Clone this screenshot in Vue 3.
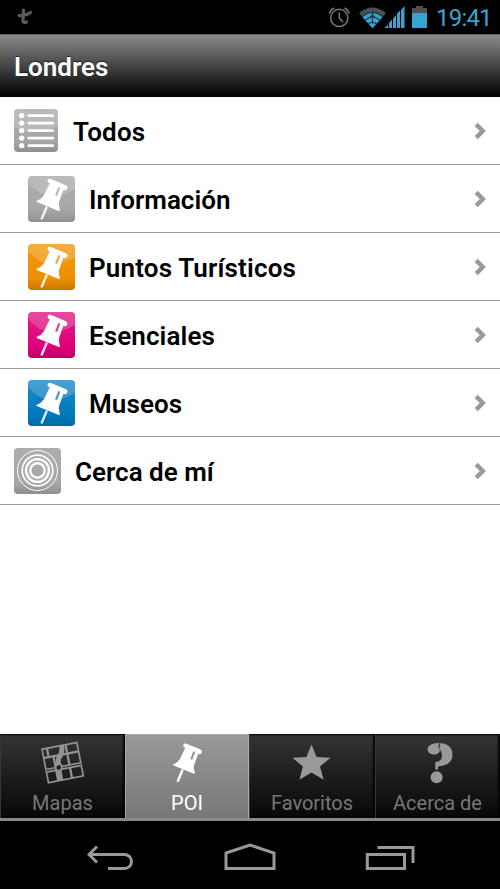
<script setup>
const rows = [
  { label: 'Todos', kind: 'list', color: 'gray', spacing: '0.2px' },
  { label: 'Información', kind: 'pin', color: 'gray', nested: true, spacing: '0px' },
  { label: 'Puntos Turísticos', kind: 'pin', color: 'orange', nested: true, spacing: '0.16px' },
  { label: 'Esenciales', kind: 'pin', color: 'pink', nested: true, spacing: '0.1px' },
  { label: 'Museos', kind: 'pin', color: 'blue', nested: true, spacing: '0.1px' },
  { label: 'Cerca de mí', kind: 'near', color: 'gray', spacing: '0px' },
]
const tabs = [
  { label: 'Mapas', kind: 'map' },
  { label: 'POI', kind: 'pin', active: true },
  { label: 'Favoritos', kind: 'star' },
  { label: 'Acerca de', kind: 'help' },
]
const pinPath =
  'M21 2.8Q19.4 3.4 19.5 5.3Q19.7 6.9 21.8 7.3L15.8 19.5Q13 23.5 8.5 25Q8.4 25.8 9.3 26.2L30.8 35Q31.9 35.2 31.9 34Q30.2 29 31.2 25.5L35.4 13.8Q38.2 14.8 39.1 13L39.5 11.3Q39.3 9.6 37.4 8.9L23 3Q22 2.5 21 2.8ZM30.3 11L27.1 19.2L29.1 20L32.3 11.8Z'
</script>

<template>
  <div class="screen">
    <header class="status">
      <svg class="bird" width="18" height="20" viewBox="0 0 18 20">
        <path d="M7.5 3L7 13.5Q7.2 16.5 10.5 15" />
        <path d="M3 8.5Q9 9.5 14.5 5.5" />
      </svg>
      <div class="indicators">
        <svg class="signals" width="78" height="26" viewBox="0 0 78 26">
          <g fill="none" stroke="#777" stroke-width="1.5">
            <circle cx="12.3" cy="13.9" r="8.6" />
            <path d="M12.3 8.5v5.6l3.6 3.8M2.3 9.5Q3.5 5.5 7.3 4M17.3 4Q21.2 5.5 22.3 9.5" />
          </g>
          <path d="M32 9Q45.5-2 59 9L45.5 24.3Z" fill="#4b4f51" />
          <path d="M35.5 13Q45.5 5 55.5 13L45.5 24.3Z" fill="#36a4d0" />
          <g fill="none" stroke="#153745" stroke-width="1.1">
            <path d="M35.5 12.5Q45.5 4.5 55.5 12.5M38.5 16Q45.5 10 52.5 16M41.5 20Q45.5 16 49.5 20M45.5 7V20M42.5 14L45.5 11L48.5 14" />
          </g>
          <path d="M57.5 24L61 20.5V24zM62 24v-5l3-3.5V24zM66 24v-9.5l3-3.5V24zM70 24V9.5l3-3V24zM74 24V6l3.5-4V24z" fill="#36a4d0" />
        </svg>
        <svg class="battery" width="15" height="22" viewBox="0 0 15 22">
          <path d="M0 2h4V0h7v2h4v6H0z" fill="#505050" />
          <path d="M0 7h15v15H0z" fill="#36a4d0" />
        </svg>
        <time>19:41</time>
      </div>
    </header>

    <div class="titlebar"><h1>Londres</h1></div>

    <main>
      <div v-for="row in rows" :key="row.label" class="row" :class="[row.kind, { nested: row.nested }]">
        <span class="tile" :class="row.color">
          <svg v-if="row.kind === 'pin'" viewBox="0 0 47 46">
            <path class="shine" d="M0 0H47V13Q24 26 9 15Q3 11 0 6Z" />
            <path :d="pinPath" fill="#fff" fill-rule="evenodd" />
            <path d="M18.5 31.5L13.8 42.5" stroke="#fff" stroke-opacity=".85" stroke-width="2.5" stroke-linecap="round" />
          </svg>
          <svg v-else-if="row.kind === 'list'" viewBox="0 0 44 43">
            <path class="shine" d="M0 0H44V17Q22 28 0 18Z" />
            <g v-for="n in 5" :key="n" fill="#fff">
              <circle cx="7.7" :cy="6.6 + (n - 1) * 7.5" r="2.7" />
              <rect x="13.5" :y="5.3 + (n - 1) * 7.5" width="26.5" height="2.7" rx="1.3" />
            </g>
          </svg>
          <svg v-else viewBox="0 0 47 46">
            <g fill="none" stroke="#fff">
              <circle cx="23.5" cy="22.5" r="20" stroke-width="1" />
              <circle cx="23.5" cy="22.5" r="15.3" stroke-width="1.7" />
              <circle cx="23.5" cy="22.5" r="11.4" stroke-width="2.4" />
              <circle cx="23.5" cy="22.5" r="7.2" stroke-width="2.4" />
            </g>
          </svg>
        </span>
        <span class="label" :style="{ letterSpacing: row.spacing }">{{ row.label }}</span>
        <svg class="chevron" width="12" height="18" viewBox="0 0 12 18">
          <path d="M2.2 2.4L8.8 9L2.2 15.6" />
        </svg>
      </div>
    </main>

    <nav class="tabs">
      <div v-for="tab in tabs" :key="tab.label" class="tab" :class="{ active: tab.active }">
        <svg v-if="tab.kind === 'map'" width="44" height="44" viewBox="0 0 44 44">
          <g transform="rotate(-11 22 22)" fill="none" stroke="#929292">
            <path d="M4 4.5H39.5V38.5H4z" stroke-width="1.7" />
            <path d="M4 13.5H39.5M28 4.5V38.5M14 14V38.5M9 4.5V14" stroke-width="2.3" />
            <path d="M4 26.5H39.5" stroke-width="4.4" />
            <path d="M24 4Q24 12 19 16Q16.5 20 16.5 39" stroke-width="5" />
            <path d="M4 26.5H39.5" stroke="#292929" stroke-width="1" />
            <circle cx="17" cy="25.5" r="3.2" fill="#222" stroke-width="1.8" />
          </g>
        </svg>
        <svg v-else-if="tab.kind === 'pin'" width="44" height="44" viewBox="0 0 47 47">
          <path :d="pinPath" fill="#fff" fill-rule="evenodd" />
          <path d="M18.5 31.5L13.8 42.5" stroke="#fff" stroke-width="2.7" stroke-linecap="round" />
        </svg>
        <svg v-else-if="tab.kind === 'star'" width="44" height="44" viewBox="0 0 44 44">
          <path d="M21.5 3.5L26.6 15.9L40.5 16.8L30 25.6L33.6 38.8L21.5 31.6L9.5 38.8L12.8 25.6L2.5 16.8L16.4 15.9Z" fill="#999" />
        </svg>
        <svg v-else width="44" height="44" viewBox="0 0 44 44">
          <path d="M19.3 28.5V21C26 20.5 26.6 16 25.5 11.5L23.3 7L24.5 2Q36.5 3 36.5 14C36.5 22 29 25 22 25.5V28.5Z" fill="#999" />
          <path d="M23.4 2L22.2 6.5L24 8.5C23.5 13 19.5 13.9 17 13.4C11 12.5 10 7.5 14 4Q17.5 1.7 23.4 2Z" fill="#999" />
          <circle cx="20.6" cy="36.3" r="6" fill="#999" />
        </svg>
        <span>{{ tab.label }}</span>
      </div>
    </nav>

    <footer class="navigation">
      <svg width="48" height="30" viewBox="0 0 48 30">
        <path d="M2 11.5H37.5A7 7 0 0 1 37.5 25.5H21M10 3.5L2 11.5L10 19.5" />
      </svg>
      <svg width="52" height="30" viewBox="0 0 52 30">
        <path d="M2 10L26 2L50 10V25.5H2z" />
      </svg>
      <svg width="50" height="30" viewBox="0 0 50 30">
        <path d="M2.3 11.5H39.5V25.5H2.3zM12.5 4.5H48V20" />
      </svg>
    </footer>
  </div>
</template>

<style>
body { margin: 0; background: #000; }
</style>

<style scoped>
.screen { width: 500px; height: 889px; display: flex; flex-direction: column; background: #fff; font-family: Roboto, sans-serif; overflow: hidden; }
svg { display: block; flex: none; }
.status { height: 34px; flex: none; background: #000; display: flex; justify-content: space-between; padding: 0 8px 0 16px; }
.bird { margin-top: 7px; fill: none; stroke: #5c5c5c; stroke-width: 3.2; stroke-linecap: round; }
.indicators { display: flex; align-items: flex-start; }
.signals { margin-top: 4px; }
.battery { margin: 6px 9px 0 7px; }
time { color: #38a6d2; font-size: 24px; line-height: 36px; width: 56px; letter-spacing: -.8px; }
.titlebar { height: 63px; box-sizing: border-box; flex: none; display: flex; align-items: center; padding: 2px 14px 0; border-top: 1px solid #606060; background: linear-gradient(#8b8b8b, #474747 48%, #050505 96%); }
h1 { margin: 0; color: #fff; font-size: 26px; line-height: 32px; font-weight: 600; letter-spacing: 0; text-shadow: 0 -1px 1px #222; }
main { flex: 1; background: #fff; }
.row { height: 68px; box-sizing: border-box; display: flex; align-items: center; padding: 0 14px; border-bottom: 1px solid #999; }
.row.nested { padding-left: 28px; }
.tile { width: 47px; height: 46px; border-radius: 4px; overflow: hidden; flex: none; }
.list .tile { width: 44px; height: 43px; }
.tile svg { width: 100%; height: 100%; }
.gray { background: linear-gradient(#abadae, #a5a7a8 75%, #8d8f90); }
.orange { background: linear-gradient(#f19a15, #ee9000 75%, #c97600); }
.pink { background: linear-gradient(#e22188, #e0007b 75%, #bc0069); }
.blue { background: linear-gradient(#218cc7, #0079bb 75%, #0069a8); }
.shine { fill: #fff; opacity: .18; }
.label { margin-left: 14px; padding-top: 2px; color: #000; font-size: 26px; line-height: 32px; font-weight: 600; white-space: nowrap; }
.list .label { margin-left: 15px; }
.chevron { margin-left: auto; fill: none; stroke: #999; stroke-width: 4.4; }
.tabs { height: 87px; box-sizing: border-box; flex: none; display: grid; grid-template-columns: 125px 124px 126px 125px; border-bottom: 3px solid #888; background: #222; }
.tab { display: flex; flex-direction: column; align-items: center; box-sizing: border-box; padding: 6px 1px 0 0; border-top: 1px solid #080808; border-left: 1px solid #373737; box-shadow: inset -2px 0 2px #050505; background: linear-gradient(#343434, #1d1d1d 50%, #070707); color: #777; font-size: 20px; line-height: 26px; }
.tab.active { border-color: #aaa; box-shadow: inset -1px 0 #aaa; background: linear-gradient(#999, #777); color: #fff; }
.tab span { margin-top: 5px; white-space: nowrap; }
.navigation { height: 68px; flex: none; background: #000; display: flex; justify-content: space-between; padding: 22px 85px 0 87px; box-sizing: border-box; }
.navigation svg { fill: none; stroke: #999; stroke-width: 3; }
</style>
